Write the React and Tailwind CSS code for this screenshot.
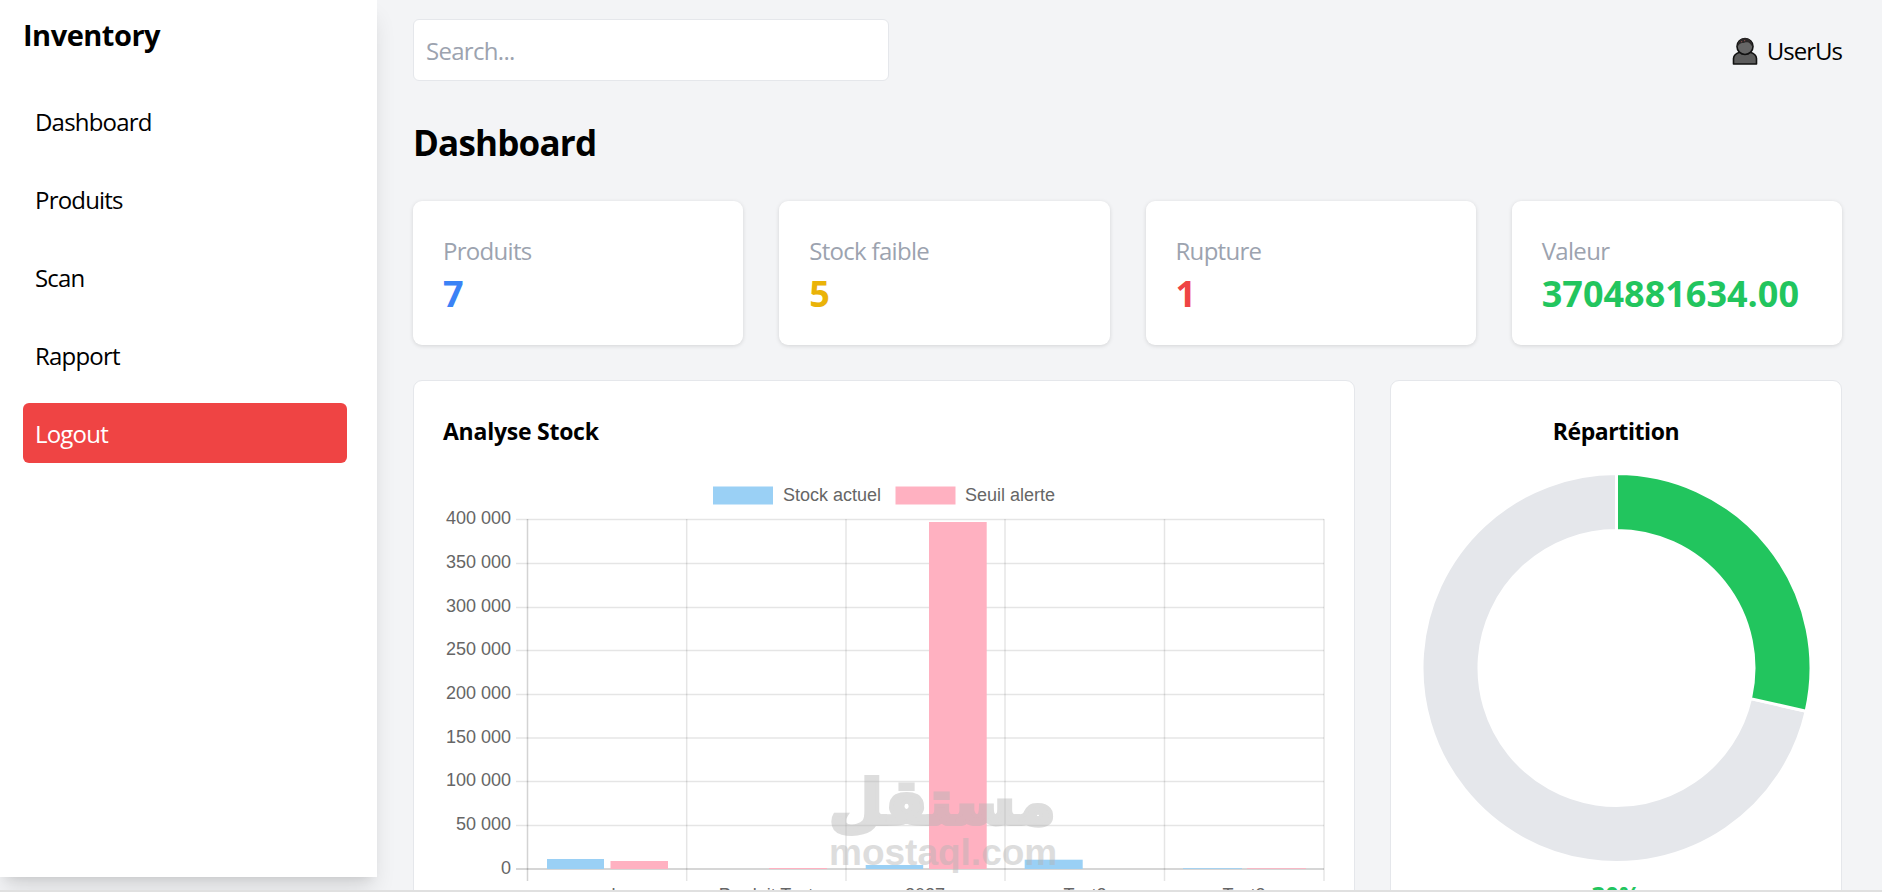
const pt = (r, deg) => {
  const a = (deg * Math.PI) / 180;
  return `${(1616.5 + r * Math.sin(a)).toFixed(2)} ${(668 + r * -Math.cos(a)).toFixed(2)}`;
};
const arc = (from, to) => {
  const large = to - from > 180 ? 1 : 0;
  return `M ${pt(194.5, from)} A 194.5 194.5 0 ${large} 1 ${pt(194.5, to)} L ${pt(137.5, to)} A 137.5 137.5 0 ${large} 0 ${pt(137.5, from)} Z`;
};

const stats = [
  { label: "Produits", value: "7", color: "text-[#3b82f6]" },
  { label: "Stock faible", value: "5", color: "text-[#eab308]" },
  { label: "Rupture", value: "1", color: "text-[#ef4444]" },
  { label: "Valeur", value: "3704881634.00", color: "text-[#22c55e]" },
];
const nav = ["Dashboard", "Produits", "Scan", "Rapport"];
const yTicks = [
  ["400 000", 518.5], ["350 000", 562.5], ["300 000", 606.5], ["250 000", 649.5],
  ["200 000", 693.5], ["150 000", 737], ["100 000", 780.5], ["50 000", 824.5], ["0", 868],
];
const xLines = [527.5, 686.7, 846, 1005, 1164.5, 1324];
const cats = [["usb", 607], ["Produit Test", 766], ["2027", 925], ["Test2", 1085], ["Test3", 1244]];
const bars = [
  [547, 858, 57, "#9ad0f5"], [610.5, 860, 57.5, "#ffb1c1"],
  [769, 867, 58, "#ffb1c1"],
  [865.7, 864, 57.5, "#9ad0f5"], [929, 521, 57.7, "#ffb1c1"],
  [1024.7, 858.7, 58, "#9ad0f5"],
  [1183, 867.2, 59, "#9ad0f5"], [1247, 867.2, 59, "#ffb1c1"],
];

function Chart() {
  return (
    <svg viewBox="443 470 900 420" width="900" height="420" className="mt-[22px] block font-['Liberation_Sans',sans-serif]">
      <g fill="#666666" fontSize="18">
        <rect x="713" y="485.5" width="60" height="18" fill="#9ad0f5" />
        <text x="783" y="500">Stock actuel</text>
        <rect x="895.5" y="485.5" width="60" height="18" fill="#ffb1c1" />
        <text x="965" y="500">Seuil alerte</text>
      </g>
      <g stroke="#000000" strokeOpacity="0.1" strokeWidth="1.5">
        {yTicks.map(([, y]) => <line key={y} x1="516" x2="1324" y1={y} y2={y} />)}
        {xLines.map((x) => <line key={x} x1={x} x2={x} y1="518" y2="880" />)}
        <line x1="527.5" x2="527.5" y1="518" y2="880" strokeOpacity="0.08" />
        <line x1="516" x2="1324" y1="868" y2="868" strokeOpacity="0.12" />
      </g>
      {bars.map(([x, y, w, c]) => <rect key={x} x={x} y={y} width={w} height={868 - y} fill={c} />)}
      <g fill="#666666" fontSize="18">
        {yTicks.map(([t, y]) => <text key={t} x="511" y={y + 4.5} textAnchor="end">{t}</text>)}
        {cats.map(([t, x]) => <text key={t} x={x} y="900" textAnchor="middle">{t}</text>)}
      </g>
    </svg>
  );
}

function Donut() {
  return (
    <svg viewBox="1420 470 392 396" width="392" height="396" className="mt-[21px] mx-auto block">
      <path d={arc(102.86, 360)} fill="#e5e7eb" stroke="#ffffff" strokeWidth="3" />
      <path d={arc(0, 102.86)} fill="#22c55e" stroke="#ffffff" strokeWidth="3" />
    </svg>
  );
}

function Person() {
  return (
    <svg viewBox="0 0 26 28" width="26" height="28" className="block">
      <path d="M1.5 27v-5.5c0-3.5 3.5-5.500 7-6.500h9c3.500 1 7 3 7 6.500V27z" fill="#5c5c5c" stroke="#111111" strokeWidth="1.6" strokeLinejoin="round" />
      <circle cx="13" cy="9.500" r="8" fill="#666666" stroke="#111111" strokeWidth="1.6" />
      <path d="M5.500 10c-.6-5 3-9 7.500-9s8 4 7.500 9c-1.500-2-2.500-4-4-4.500-2.500-.8-4.500.5-6.500.5-2 .3-3.500 2-4.500 4z" fill="#2b2828" />
      <path d="M9 4h1.200v1.200H9zM12 3h1.200v1.200H12z" fill="#7a4a4a" />
    </svg>
  );
}

export default function App() {
  return (
    <div className="h-[892px] w-[1882px] flex flex-col overflow-hidden bg-[#f3f4f6] text-black font-['Open_Sans',sans-serif]">
      <div className="relative h-[890px] flex overflow-hidden">
        <aside className="w-[377px] h-[877px] shrink-0 self-start bg-white pl-[23px] pr-[30px] pt-[12px] shadow-[0_15px_22px_-4px_rgba(0,0,0,0.12),0_6px_10px_-6px_rgba(0,0,0,0.1)]">
          <h1 className="text-[29px] leading-[45px] font-bold mb-[35px] tracking-[-0.5px]">Inventory</h1>
          <nav className="flex flex-col gap-[18px] text-[24px] leading-[36px] tracking-[-0.8px]">
            {nav.map((n) => <a key={n} className="block h-[60px] px-[12px] py-[12px]">{n}</a>)}
            <a className="block h-[60px] -mt-px px-[12px] pt-[13px] rounded-[6px] bg-[#ef4444] text-white">Logout</a>
          </nav>
        </aside>

        <main className="flex-1 min-w-0 pl-9 pr-10 pt-[19px]">
          <header className="flex items-center justify-between h-[62px]">
            <div className="w-[476px] h-[62px] rounded-[6px] border border-[#e5e7eb] bg-white px-3 pt-[2px] flex items-center text-[24px] text-[#9ca3af] tracking-[-0.7px]">Search...</div>
            <div className="flex items-center gap-[9px] pt-[2px] text-[24px] tracking-[-1px]">
              <Person />
              <span>UserUs</span>
            </div>
          </header>

          <h2 className="mt-[35px] text-[35px] leading-[54px] font-bold mb-[31px] tracking-[-0.8px]">Dashboard</h2>

          <section className="grid grid-cols-4 gap-9">
            {stats.map((s) => (
              <div key={s.label} className="h-[144px] rounded-[9px] bg-white px-[30px] pt-[32px] shadow-[0_1px_4px_rgba(0,0,0,0.13)]">
                <div className="text-[24px] leading-[36px] text-[#9ca3af] tracking-[-0.7px]">{s.label}</div>
                <div className={`text-[36px] leading-[49px] font-bold ${s.color}`}>{s.value}</div>
              </div>
            ))}
          </section>

          <section className="mt-[35px] flex gap-[35px] items-start">
            <div className="relative w-[942px] h-[700px] shrink-0 rounded-[9px] border border-[#e5e7eb] bg-white px-[29px] pt-[32px]">
              <h3 className="text-[23px] leading-[36px] font-bold tracking-[-0.25px]">Analyse Stock</h3>
              <Chart />
              <div className="absolute left-[415px] top-[389px] w-[226px] text-center text-[#b4b4b4] opacity-45 pointer-events-none">
                <div className="font-['DejaVu_Sans',sans-serif] font-bold text-[62px] leading-[66px] whitespace-nowrap [-webkit-text-stroke:4px_#b4b4b4]">مستقل</div>
                <div className="font-['Liberation_Sans',sans-serif] font-bold text-[37px] leading-[44px] -mt-[5px] whitespace-nowrap">mostaql.com</div>
              </div>
            </div>
            <div className="w-[452px] h-[700px] shrink-0 rounded-[9px] border border-[#e5e7eb] bg-white pt-[32px] text-center">
              <h3 className="text-[23px] leading-[36px] font-bold tracking-[-0.4px]">Répartition</h3>
              <Donut />
              <div className="mt-[11px] text-[24px] leading-[36px] font-bold text-[#22c55e]">30%</div>
            </div>
          </section>
        </main>
      </div>
      <div className="h-[2px] bg-[#e0e0e0]" />
    </div>
  );
}
